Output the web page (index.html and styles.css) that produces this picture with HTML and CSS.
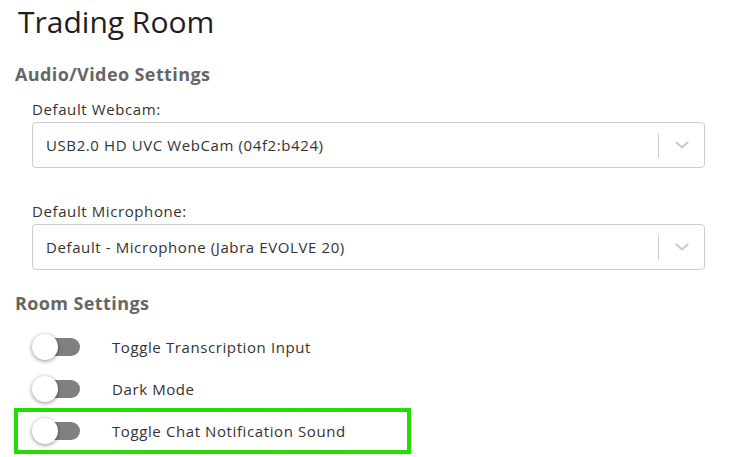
FILE: index.html
```html
<!DOCTYPE html>
<html>
<head>
<meta charset="utf-8">
<link rel="stylesheet" href="styles.css">
</head>
<body>
<div class="page">
  <h1 class="title">Trading Room</h1>
  <h2 class="section">Audio/Video Settings</h2>
  <div class="field">
    <label class="field-label">Default Webcam:</label>
    <div class="select">
      <div class="select-value">USB2.0 HD UVC WebCam (04f2:b424)</div>
      <span class="select-sep"></span>
      <div class="select-ind">
        <svg width="20" height="20" viewBox="0 0 20 20"><path d="M4.5 7.5 L10 12.5 L15.5 7.5" fill="none" stroke="#cccccc" stroke-width="2.2" stroke-linecap="round" stroke-linejoin="round"/></svg>
      </div>
    </div>
  </div>
  <div class="field field-second">
    <label class="field-label">Default Microphone:</label>
    <div class="select">
      <div class="select-value">Default - Microphone (Jabra EVOLVE 20)</div>
      <span class="select-sep"></span>
      <div class="select-ind">
        <svg width="20" height="20" viewBox="0 0 20 20"><path d="M4.5 7.5 L10 12.5 L15.5 7.5" fill="none" stroke="#cccccc" stroke-width="2.2" stroke-linecap="round" stroke-linejoin="round"/></svg>
      </div>
    </div>
  </div>
  <h2 class="section section-room">Room Settings</h2>
  <div class="toggles">
    <div class="toggle-row">
      <span class="switch"><span class="track"></span><span class="knob"></span></span>
      <span class="toggle-label">Toggle Transcription Input</span>
    </div>
    <div class="toggle-row">
      <span class="switch"><span class="track"></span><span class="knob"></span></span>
      <span class="toggle-label">Dark Mode</span>
    </div>
    <div class="toggle-row highlighted">
      <span class="switch"><span class="track"></span><span class="knob"></span></span>
      <span class="toggle-label">Toggle Chat Notification Sound</span>
    </div>
  </div>
</div>
</body>
</html>
```
FILE: styles.css
```css
* { box-sizing: border-box; }
html, body { margin: 0; padding: 0; background: #ffffff; }
body {
  font-family: "Open Sans", "DejaVu Sans", sans-serif;
  color: #333333;
}
.page {
  padding: 0 30px 0 14px;
}
.title {
  margin: 2px 0 0 4px;
  font-size: 30px;
  line-height: 40px;
  font-weight: 400;
  color: #1e1e1e;
}
.section {
  margin: 20px 0 0 1px;
  font-size: 18px;
  line-height: 24px;
  font-weight: 700;
  letter-spacing: 0.4px;
  color: #666666;
}
.section-room {
  margin-top: 21px;
}
.field {
  margin: 13px 0 0 18px;
}
.field-second {
  margin-top: 33px;
}
.field-label {
  display: block;
  font-size: 15px;
  line-height: 20px;
  letter-spacing: 0.6px;
  color: #333333;
  margin-bottom: 3px;
}
.select {
  display: flex;
  align-items: center;
  height: 46px;
  border: 1px solid #cccccc;
  border-radius: 4px;
  background: #fff;
}
.select-value {
  flex: 1;
  padding-left: 13px;
  font-size: 15px;
  letter-spacing: 0.6px;
  color: #333333;
}
.select-sep {
  width: 1px;
  height: 25px;
  background: #cccccc;
}
.select-ind {
  width: 45px;
  display: flex;
  justify-content: center;
  align-items: center;
}
.select-ind svg { display: block; }
.toggles {
  margin-top: 9px;
}
.toggle-row {
  display: flex;
  align-items: center;
  height: 46px;
  width: 397px;
  border: 4px solid transparent;
  padding-left: 14px;
  margin-top: -4px;
}
.toggle-row:first-child { margin-top: 0; }
.toggle-row.highlighted {
  border-color: #22dd00;
}
.switch {
  position: relative;
  width: 48px;
  height: 28px;
  flex: none;
}
.track {
  position: absolute;
  left: 8px;
  top: 5px;
  width: 40px;
  height: 18px;
  border-radius: 9px;
  background: #808080;
}
.knob {
  position: absolute;
  left: 0;
  top: 1px;
  width: 26px;
  height: 26px;
  border-radius: 50%;
  background: #ffffff;
  box-shadow: 0 1px 4px rgba(0,0,0,0.45);
}
.toggle-label {
  margin-left: 32px;
  font-size: 15px;
  letter-spacing: 0.6px;
  color: #333333;
}
```
